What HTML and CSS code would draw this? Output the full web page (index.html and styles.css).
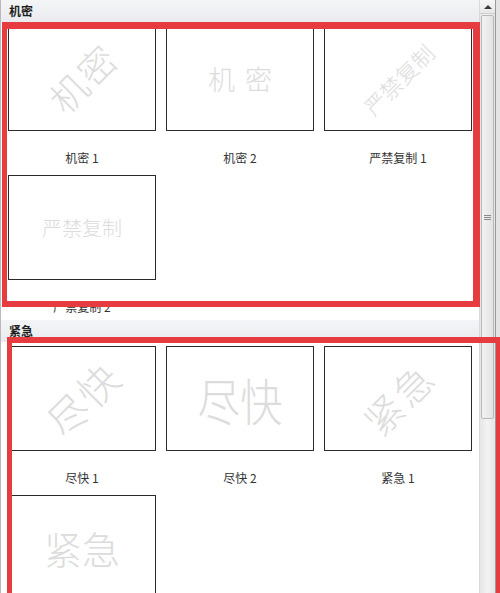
FILE: index.html
```html
<!DOCTYPE html>
<html lang="zh-CN">
<head>
<meta charset="utf-8">
<title>水印库</title>
<link rel="stylesheet" href="styles.css">
</head>
<body>
<div class="window">
  <div class="pane">
    <section class="group">
      <div class="group-head">机密</div>
      <div class="grid">
        <div class="item">
          <div class="thumb"><span class="wm diag jm1">机密</span></div>
          <div class="label">机密 1</div>
        </div>
        <div class="item">
          <div class="thumb"><span class="wm jm2">机密</span></div>
          <div class="label">机密 2</div>
        </div>
        <div class="item">
          <div class="thumb"><span class="wm diag yj1">严禁复制</span></div>
          <div class="label">严禁复制 1</div>
        </div>
        <div class="item">
          <div class="thumb"><span class="wm yj2">严禁复制</span></div>
          <div class="label">严禁复制 2</div>
        </div>
      </div>
    </section>
    <section class="group">
      <div class="group-head">紧急</div>
      <div class="grid">
        <div class="item">
          <div class="thumb"><span class="wm diag jk1">尽快</span></div>
          <div class="label">尽快 1</div>
        </div>
        <div class="item">
          <div class="thumb"><span class="wm jk2">尽快</span></div>
          <div class="label">尽快 2</div>
        </div>
        <div class="item">
          <div class="thumb"><span class="wm diag jj1">紧急</span></div>
          <div class="label">紧急 1</div>
        </div>
        <div class="item">
          <div class="thumb"><span class="wm jj2">紧急</span></div>
          <div class="label">紧急 2</div>
        </div>
      </div>
    </section>
  </div>
  <div class="scrollbar">
    <div class="sb-up"><span class="sb-arrow"></span></div>
    <div class="sb-thumb">
      <div class="grip"><i></i><i></i><i></i></div>
    </div>
  </div>
  <div class="edge"></div>
</div>
<div class="mark mark-1"></div>
<div class="mark mark-2"></div>
</body>
</html>
```

FILE: styles.css
```css
html, body {
  margin: 0;
  padding: 0;
}

body {
  width: 500px;
  height: 593px;
  overflow: hidden;
  position: relative;
  background: #ffffff;
  font-family: "Noto Sans CJK SC", "Noto Sans", "DejaVu Sans", sans-serif;
}

.window {
  display: flex;
  height: 593px;
}

.pane {
  width: 479px;
  border-left: 1px solid #b9b9b9;
  overflow: hidden;
  background: #ffffff;
}

.group-head {
  height: 22px;
  line-height: 22px;
  padding-left: 8px;
  font-size: 12px;
  font-weight: bold;
  color: #1e1e1e;
  background: linear-gradient(#f4f5f7, #e9ebee);
}

.grid {
  display: grid;
  grid-template-columns: repeat(3, 148px);
  column-gap: 10px;
  row-gap: 4px;
  padding: 4px 0 0 7px;
}

.item {
  height: 145px;
  display: flex;
  flex-direction: column;
  align-items: center;
}

.thumb {
  width: 148px;
  height: 105px;
  box-sizing: border-box;
  border: 1px solid #2a2a2a;
  background: #ffffff;
  display: flex;
  align-items: center;
  justify-content: center;
  overflow: hidden;
}

.label {
  padding-top: 20px;
  font-size: 12px;
  line-height: 14px;
  color: #333333;
}

.wm {
  color: #dcdcdc;
  font-weight: 300;
  white-space: nowrap;
  line-height: 1;
}

.diag {
  transform: rotate(-45deg);
}

.jm1 { font-size: 37px; letter-spacing: 2px; padding-left: 2px; }
.jm2 { font-size: 27px; letter-spacing: 10px; padding-left: 10px; }
.yj1 { font-size: 22px; }
.yj2 { font-size: 20px; }
.jk1 { font-size: 40px; letter-spacing: 2px; padding-left: 2px; }
.jk2 { font-size: 50px; transform: scaleX(0.85); }
.jj1 { font-size: 38px; letter-spacing: 3px; padding-left: 3px; }
.jj2 { font-size: 38px; }

.scrollbar {
  width: 15px;
  border-left: 1px solid #d9d9d9;
  background: linear-gradient(90deg, #e6e6e6, #f3f3f3 50%, #e6e6e6);
  display: flex;
  flex-direction: column;
}

.sb-up {
  height: 13px;
  display: flex;
  align-items: center;
  justify-content: center;
  border-bottom: 1px solid #cfcfcf;
  background: linear-gradient(#f6f6f6, #e8e8e8);
}

.sb-arrow {
  width: 0;
  height: 0;
  border-left: 4px solid transparent;
  border-right: 4px solid transparent;
  border-bottom: 4px solid #3c3c3c;
}

.sb-thumb {
  margin: 1px 1px 0 1px;
  height: 404px;
  box-sizing: border-box;
  border: 1px solid #b8b8b8;
  border-radius: 2px;
  background: linear-gradient(90deg, #f2f2f2, #e3e3e3);
  display: flex;
  align-items: center;
  justify-content: center;
}

.grip {
  display: flex;
  flex-direction: column;
  gap: 1px;
}

.grip i {
  display: block;
  width: 7px;
  height: 1px;
  background: #8a8a8a;
}

.edge {
  width: 4px;
  border-left: 1px solid #9a9a9a;
  background: #e4e4e4;
}

.mark {
  position: absolute;
  box-sizing: border-box;
  border: 6px solid #e63c3f;
  pointer-events: none;
}

.mark-1 {
  left: 2px;
  top: 22px;
  width: 478px;
  height: 285px;
  border-top-width: 7px;
  border-right-width: 7px;
  border-left-width: 5px;
}

.mark-2 {
  left: 7px;
  top: 337px;
  width: 495px;
  height: 300px;
  border-left-width: 5px;
}
```
